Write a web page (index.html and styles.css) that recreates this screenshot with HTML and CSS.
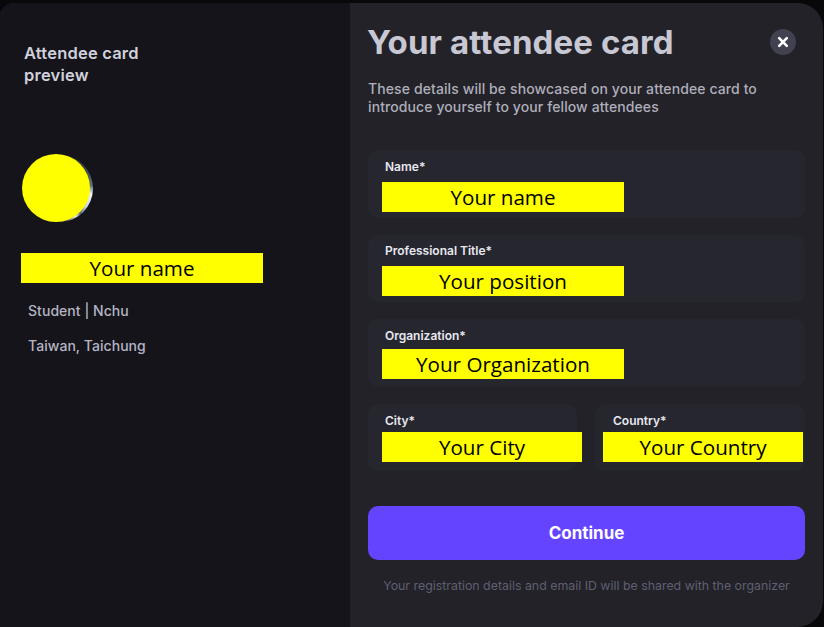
FILE: index.html
```html
<!DOCTYPE html>
<html lang="en">
<head>
<meta charset="utf-8">
<title>Your attendee card</title>
<link rel="stylesheet" href="styles.css">
</head>
<body>
<div class="modal">
  <aside class="preview">
    <h2 class="preview-title">Attendee card<br>preview</h2>
    <div class="avatar"><div class="avatar-photo"></div><div class="avatar-mask"></div></div>
    <div class="mask mask-preview">Your name</div>
    <p class="meta meta-role">Student | Nchu</p>
    <p class="meta meta-place">Taiwan, Taichung</p>
  </aside>
  <main class="form">
    <header class="form-head">
      <h1 class="form-title">Your attendee card</h1>
      <button class="close" aria-label="Close">
        <svg viewBox="0 0 12 12" width="12" height="12"><path d="M2.2 2.2 L9.8 9.8 M9.8 2.2 L2.2 9.8" stroke="#fff" stroke-width="2.6" stroke-linecap="round" fill="none"/></svg>
      </button>
    </header>
    <p class="intro">These details will be showcased on your attendee card to<br>introduce yourself to your fellow attendees</p>
    <div class="field f1"><span class="label">Name*</span><div class="mask mask-wide">Your name</div></div>
    <div class="field f2"><span class="label">Professional Title*</span><div class="mask mask-wide">Your position</div></div>
    <div class="field f3"><span class="label">Organization*</span><div class="mask mask-wide">Your Organization</div></div>
    <div class="field-row">
      <div class="field city"><span class="label">City*</span><div class="mask mask-low">Your City</div></div>
      <div class="field country"><span class="label">Country*</span><div class="mask mask-low">Your Country</div></div>
    </div>
    <button class="continue">Continue</button>
    <p class="note">Your registration details and email ID will be shared with the organizer</p>
  </main>
</div>
</body>
</html>
```
FILE: styles.css
```css
* { box-sizing: border-box; }
html, body { margin: 0; height: 100%; background: #08080a; overflow: hidden; }
body { font-family: Inter, "Liberation Sans", sans-serif; padding: 3px 1px 0 0; }
p, h1, h2 { margin: 0; }

.modal {
  display: flex;
  height: 624px;
  background: #222228;
  border-radius: 14px 25px 26px 0;
  overflow: hidden;
}

.preview {
  width: 350px;
  flex: none;
  background: #14141a;
  padding: 39px 0 0 24px;
}
.preview-title {
  font-size: 16.5px;
  font-weight: 600;
  line-height: 22px;
  color: #d0d0dc;
  letter-spacing: 0.2px;
}
.avatar { position: relative; width: 72px; height: 68px; margin: 68px 0 0 -2px; }
.avatar-photo {
  position: absolute; top: 1px; left: 4px; width: 67px; height: 67px; border-radius: 50%;
  background: conic-gradient(#2c3436 0deg, #3f4d4c 60deg, #66757a 85deg, #f4f4f8 100deg, #c8d2e0 125deg, #5a6678 140deg, #e8e8f0 150deg, #30303a 170deg, #14141a 200deg, #14141a 360deg);
}
.avatar-mask { position: absolute; top: 0; left: 0; width: 68px; height: 68px; border-radius: 50%; background: #ff0; }

.mask {
  display: flex;
  align-items: center;
  justify-content: center;
  height: 30px;
  padding-bottom: 1px;
  background: #ff0;
  color: #000;
  font-family: "Open Sans", "Noto Sans", sans-serif;
  font-size: 20.6px;
  white-space: nowrap;
}
.mask-preview { width: 242px; margin: 31px 0 0 -3px; }
.meta { font-size: 14px; line-height: 18px; font-weight: 500; color: #b4b4c4; margin-left: 4px; letter-spacing: 0.05px; }
.meta-role { margin-top: 19px; }
.meta-place { margin-top: 17px; }

.form { flex: 1; padding: 0 18px; min-width: 0; }
.form-head { display: flex; justify-content: space-between; align-items: center; height: 78px; padding-right: 8px; }
.form-title { font-size: 33px; font-weight: 700; color: #c8c8d4; line-height: 80px; letter-spacing: 0.1px; margin-left: -1px; }
.close {
  width: 26px; height: 26px; border-radius: 50%; border: 0; padding: 0;
  background: #41414f;
  display: flex; align-items: center; justify-content: center;
  margin-right: 1px;
}
.intro { font-size: 14px; line-height: 18px; font-weight: 500; color: #afafbb; margin-top: -1px; letter-spacing: 0.1px; }

.field {
  height: 68px;
  background: #26262e;
  border-radius: 10px;
  padding: 9px 0 0 14px;
}
.f1 { margin-top: 34px; }
.f2 { margin-top: 17px; height: 67px; padding-top: 8px; }
.f3 { margin-top: 17px; }
.label { display: block; font-size: 12px; line-height: 16px; font-weight: 600; color: #e8e8f0; margin-left: 3px; }
.mask-wide { width: 242px; margin-top: 7px; }
.f3 .mask-wide { margin-top: 5px; }
.field-row { display: flex; gap: 18px; margin-top: 17px; }
.field-row .field { height: 67px; }
.city { width: 209px; }
.country { width: 210px; padding-left: 8px; }
.country .label { margin-left: 10px; }
.mask-low { width: 200px; margin-top: 3px; }

.continue {
  display: block;
  width: 437px;
  height: 54px;
  margin-top: 35px;
  border: 0;
  border-radius: 10px;
  background: #6444ff;
  color: #fff;
  font-family: inherit;
  font-size: 17px;
  font-weight: 700;
}
.note { font-size: 12.36px; line-height: 16px; text-align: center; color: #5f5f72; margin-top: 18px; white-space: nowrap; }
```
